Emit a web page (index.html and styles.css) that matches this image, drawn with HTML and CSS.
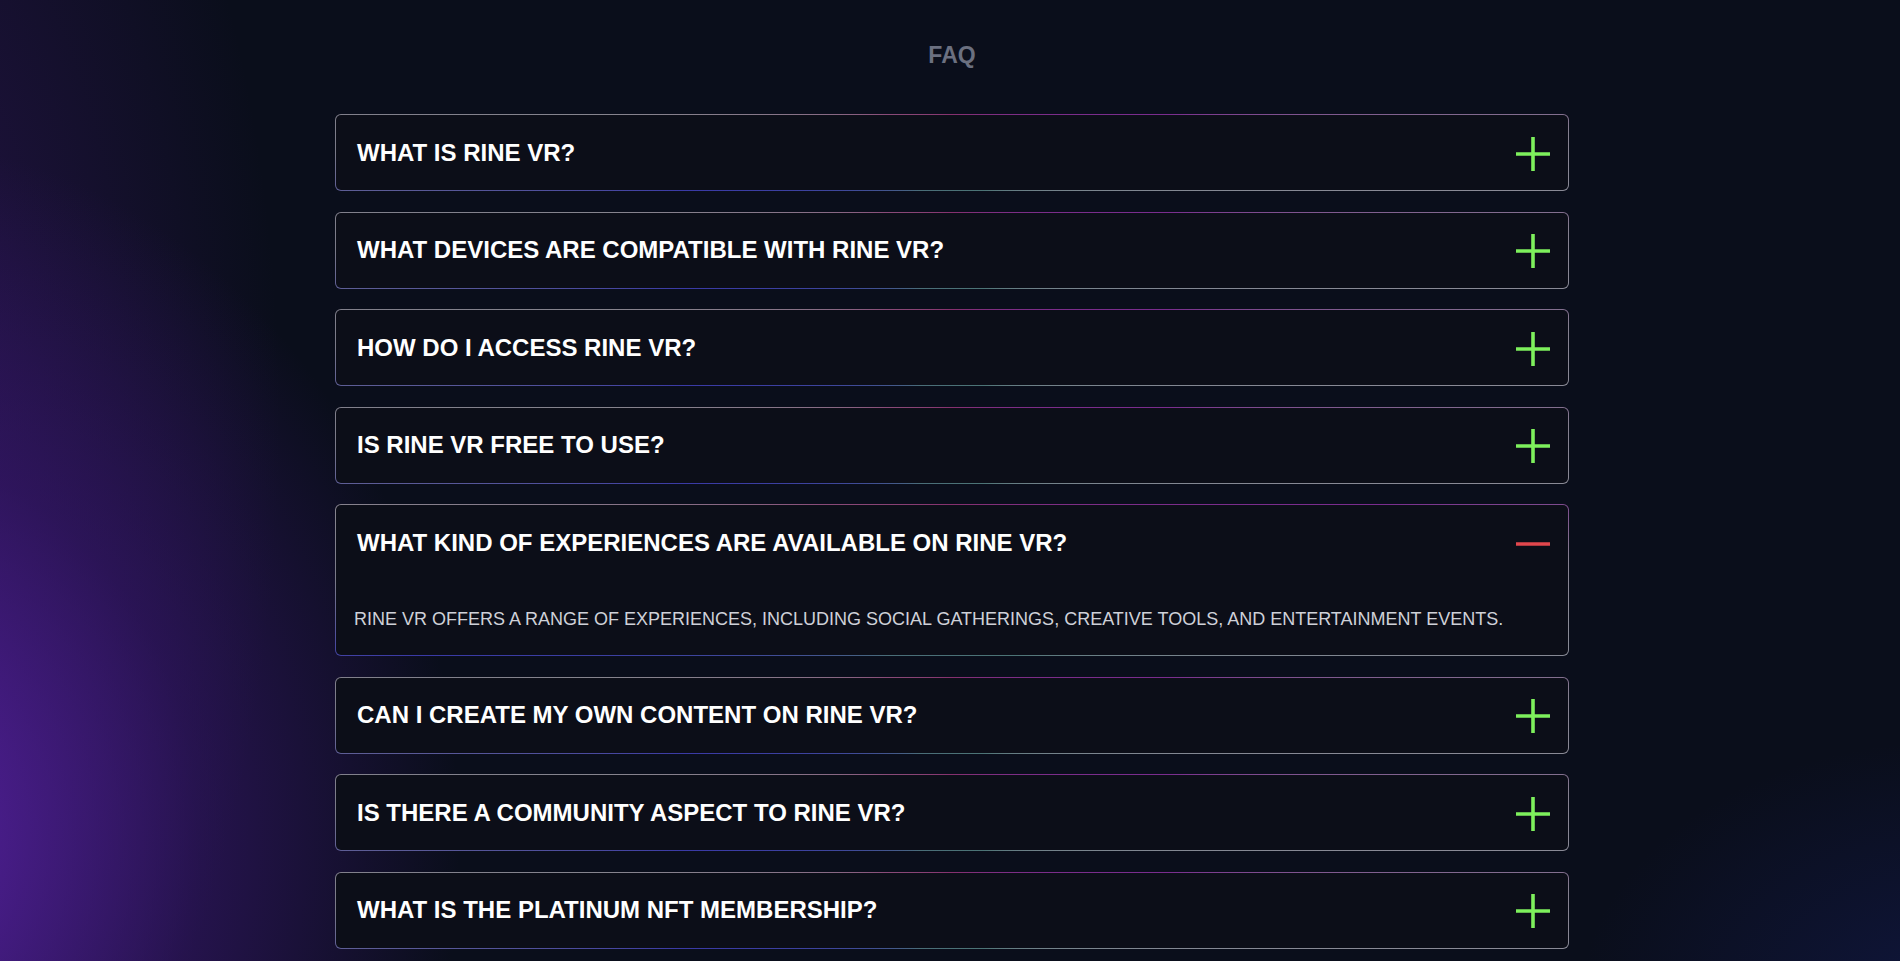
FILE: index.html
```html
<!DOCTYPE html>
<html lang="en">
<head>
<meta charset="utf-8">
<title>FAQ</title>
<link rel="stylesheet" href="styles.css">
</head>
<body>
<section class="faq">
  <h2 class="faq-title">FAQ</h2>
  <div class="faq-list">
    <div class="faq-item">
      <div class="faq-q"><span>WHAT IS RINE VR?</span>
        <svg class="icon plus" viewBox="0 0 34 34"><path d="M0 17H34M17 0V34"/></svg></div>
    </div>
    <div class="faq-item">
      <div class="faq-q"><span>WHAT DEVICES ARE COMPATIBLE WITH RINE VR?</span>
        <svg class="icon plus" viewBox="0 0 34 34"><path d="M0 17H34M17 0V34"/></svg></div>
    </div>
    <div class="faq-item">
      <div class="faq-q"><span>HOW DO I ACCESS RINE VR?</span>
        <svg class="icon plus" viewBox="0 0 34 34"><path d="M0 17H34M17 0V34"/></svg></div>
    </div>
    <div class="faq-item">
      <div class="faq-q"><span>IS RINE VR FREE TO USE?</span>
        <svg class="icon plus" viewBox="0 0 34 34"><path d="M0 17H34M17 0V34"/></svg></div>
    </div>
    <div class="faq-item open">
      <div class="faq-q"><span>WHAT KIND OF EXPERIENCES ARE AVAILABLE ON RINE VR?</span>
        <svg class="icon minus" viewBox="0 0 34 34"><path d="M0 17H34"/></svg></div>
      <p class="faq-a">RINE VR OFFERS A RANGE OF EXPERIENCES, INCLUDING SOCIAL GATHERINGS, CREATIVE TOOLS, AND ENTERTAINMENT EVENTS.</p>
    </div>
    <div class="faq-item">
      <div class="faq-q"><span>CAN I CREATE MY OWN CONTENT ON RINE VR?</span>
        <svg class="icon plus" viewBox="0 0 34 34"><path d="M0 17H34M17 0V34"/></svg></div>
    </div>
    <div class="faq-item">
      <div class="faq-q"><span>IS THERE A COMMUNITY ASPECT TO RINE VR?</span>
        <svg class="icon plus" viewBox="0 0 34 34"><path d="M0 17H34M17 0V34"/></svg></div>
    </div>
    <div class="faq-item">
      <div class="faq-q"><span>WHAT IS THE PLATINUM NFT MEMBERSHIP?</span>
        <svg class="icon plus" viewBox="0 0 34 34"><path d="M0 17H34M17 0V34"/></svg></div>
    </div>
  </div>
</section>
</body>
</html>
```

FILE: styles.css
```css
* { box-sizing: border-box; }
html, body { margin: 0; padding: 0; }
body {
  min-height: 100vh;
  font-family: "Liberation Sans", Arial, sans-serif;
  color: #fff;
  background:
    radial-gradient(ellipse 580px 700px at -120px 840px, rgba(90, 34, 168, 0.95), rgba(64, 24, 126, 0.5) 55%, rgba(10, 14, 26, 0) 100%),
    radial-gradient(ellipse 440px 900px at -160px 420px, rgba(64, 24, 118, 0.55), rgba(10, 14, 26, 0) 100%),
    radial-gradient(ellipse 380px 260px at 1960px 1000px, rgba(24, 34, 110, 0.4), rgba(10, 14, 26, 0) 100%),
    #0a0e1b;
  background-attachment: fixed;
}
.faq {
  padding: 42px 0 40px 4px;
}
.faq-title {
  margin: 0 0 46px;
  text-align: center;
  font-size: 23px;
  line-height: 26px;
  font-weight: 700;
  color: #6b7080;
}
.faq-list {
  width: 1234px;
  margin: 0 auto;
  display: flex;
  flex-direction: column;
  gap: 20.5px;
}
.faq-item {
  border: 1px solid transparent;
  border-radius: 6px;
  background:
    linear-gradient(#0c0e18, #0c0e18) padding-box,
    conic-gradient(from 0deg at 50% 50%,
      #86306e 0deg, #7a2c8e 80deg, #85808f 88deg, #8a8a96 94deg,
      #4c7476 140deg, #4a6e78 220deg, #3a3aa6 262deg,
      #7a7a88 270deg, #86848e 276deg, #8a4a78 300deg, #86306e 360deg) border-box;
}
.faq-q {
  height: 75px;
  padding: 2px 18px 0 21px;
  display: flex;
  align-items: center;
  justify-content: space-between;
  font-size: 24px;
  font-weight: 700;
}
.faq-q span { margin-top: -2px; }
.icon {
  width: 34px;
  height: 34px;
  flex: none;
  fill: none;
  stroke-width: 3.6;
}
.plus { stroke: #7ef05c; }
.minus { stroke: #e2474d; }
.faq-a {
  margin: 0;
  padding: 26px 18px 22px;
  font-size: 18px;
  line-height: 27px;
  color: #cfd1d8;
}
```
